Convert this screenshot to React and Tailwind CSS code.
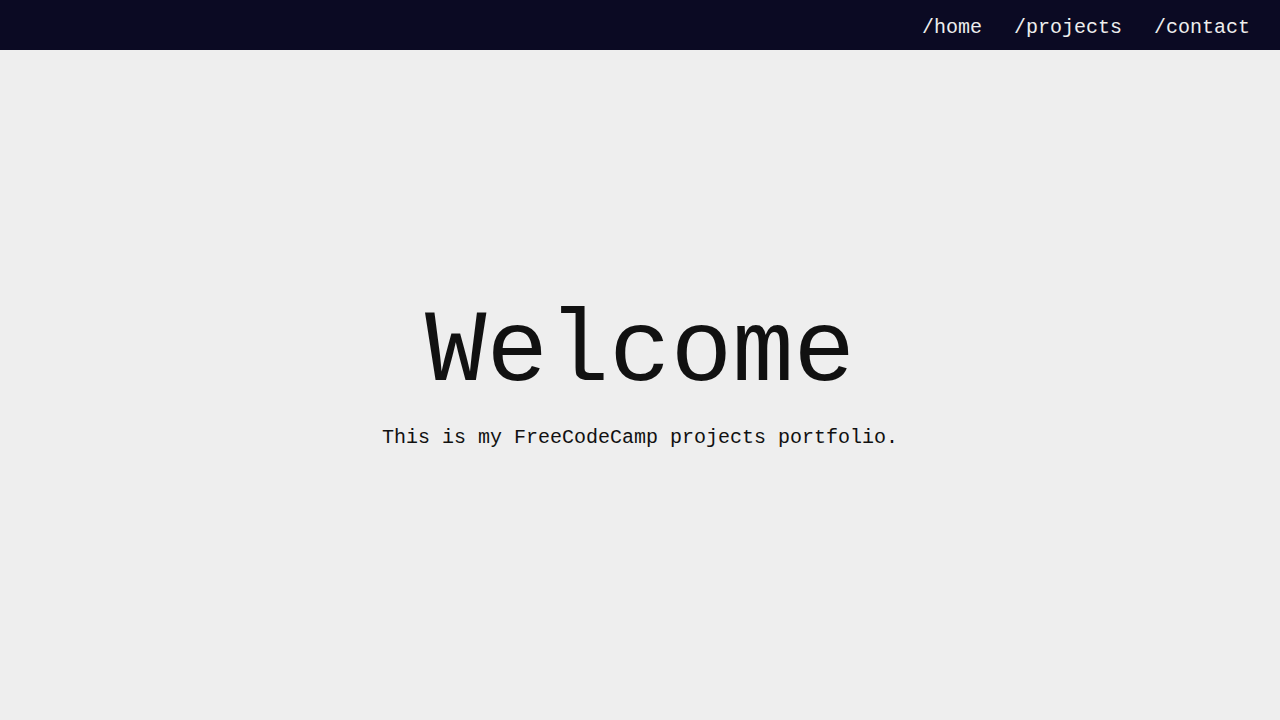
export default function App() {
  const links = ['/home', '/projects', '/contact'];
  return (
    <div className="min-h-screen bg-[#eeeeee] font-['Liberation_Mono',monospace] text-[#111111]">
      <nav className="fixed top-0 left-0 right-0 h-[50px] bg-[#0b0a23] flex items-center justify-end pr-[30px] pt-[6px]">
        <ul className="flex gap-8">
          {links.map((l) => (
            <li key={l}>
              <a href="#" className="text-[20px] text-[#eeeeee]">{l}</a>
            </li>
          ))}
        </ul>
      </nav>
      <section className="h-screen flex flex-col items-center justify-center pt-[35px]">
        <h1 className="text-[102.4px] leading-none">Welcome</h1>
        <p className="text-[20px] mt-[19px]">This is my FreeCodeCamp projects portfolio.</p>
      </section>
    </div>
  );
}
